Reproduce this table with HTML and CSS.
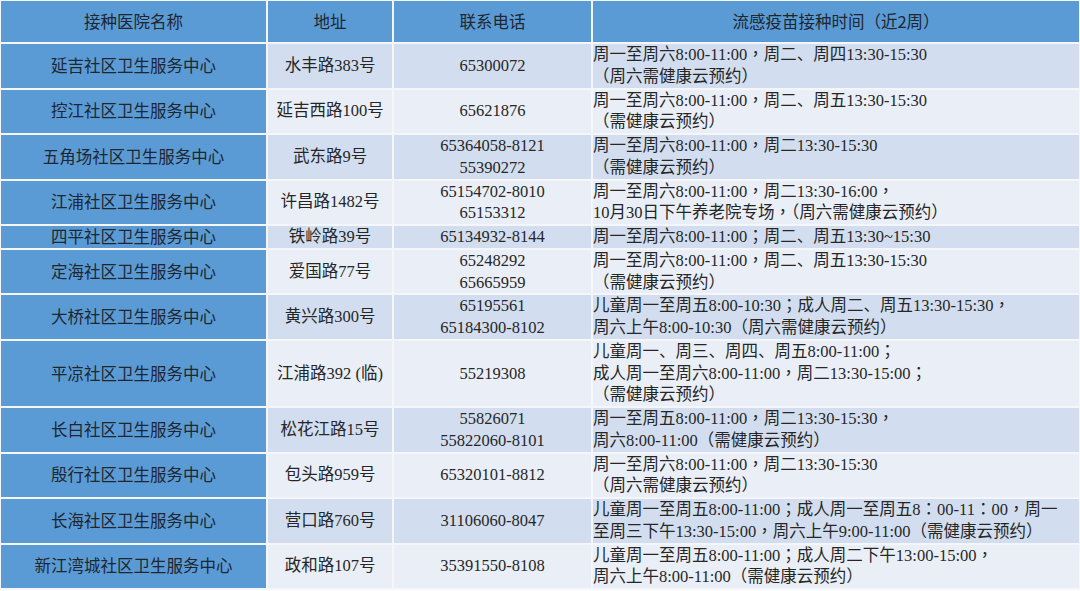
FILE: index.html
```html
<!DOCTYPE html>
<html lang="zh-CN">
<head>
<meta charset="utf-8">
<title>流感疫苗接种时间</title>
<link rel="stylesheet" href="styles.css">
</head>
<body>
<table class="schedule">
  <colgroup>
    <col class="c-name">
    <col class="c-addr">
    <col class="c-tel">
    <col class="c-time">
  </colgroup>
  <thead>
    <tr class="head">
      <th>接种医院名称</th>
      <th>地址</th>
      <th>联系电话</th>
      <th>流感疫苗接种时间（近2周）</th>
    </tr>
  </thead>
  <tbody>
    <tr class="dark">
      <td class="name">延吉社区卫生服务中心</td>
      <td class="addr">水丰路383号</td>
      <td class="tel">65300072</td>
      <td class="time">周一至周六8:00-11:00<span class="p" lang="zh-TW">，</span>周二、周四13:30-15:30<br>（周六需健康云预约）</td>
    </tr>
    <tr class="light">
      <td class="name">控江社区卫生服务中心</td>
      <td class="addr">延吉西路100号</td>
      <td class="tel">65621876</td>
      <td class="time">周一至周六8:00-11:00<span class="p" lang="zh-TW">，</span>周二、周五13:30-15:30<br>（需健康云预约）</td>
    </tr>
    <tr class="dark">
      <td class="name">五角场社区卫生服务中心</td>
      <td class="addr">武东路9号</td>
      <td class="tel">65364058-8121<br>55390272</td>
      <td class="time">周一至周六8:00-11:00<span class="p" lang="zh-TW">，</span>周二13:30-15:30<br>（需健康云预约）</td>
    </tr>
    <tr class="light">
      <td class="name">江浦社区卫生服务中心</td>
      <td class="addr">许昌路1482号</td>
      <td class="tel">65154702-8010<br>65153312</td>
      <td class="time">周一至周六8:00-11:00<span class="p" lang="zh-TW">，</span>周二13:30-16:00<span class="p" lang="zh-TW">，</span><br>10月30日下午养老院专场<span class="p" lang="zh-TW">，</span>（周六需健康云预约）</td>
    </tr>
    <tr class="dark">
      <td class="name">四平社区卫生服务中心</td>
      <td class="addr">铁岭路39号</td>
      <td class="tel">65134932-8144</td>
      <td class="time">周一至周六8:00-11:00<span class="p" lang="zh-TW">；</span>周二、周五13:30~15:30</td>
    </tr>
    <tr class="light">
      <td class="name">定海社区卫生服务中心</td>
      <td class="addr">爱国路77号</td>
      <td class="tel">65248292<br>65665959</td>
      <td class="time">周一至周六8:00-11:00<span class="p" lang="zh-TW">，</span>周二、周五13:30-15:30<br>（需健康云预约）</td>
    </tr>
    <tr class="dark">
      <td class="name">大桥社区卫生服务中心</td>
      <td class="addr">黄兴路300号</td>
      <td class="tel">65195561<br>65184300-8102</td>
      <td class="time">儿童周一至周五8:00-10:30<span class="p" lang="zh-TW">；</span>成人周二、周五13:30-15:30<span class="p" lang="zh-TW">，</span><br>周六上午8:00-10:30（周六需健康云预约）</td>
    </tr>
    <tr class="light">
      <td class="name">平凉社区卫生服务中心</td>
      <td class="addr">江浦路392 (临)</td>
      <td class="tel">55219308</td>
      <td class="time">儿童周一、周三、周四、周五8:00-11:00<span class="p" lang="zh-TW">；</span><br>成人周一至周六8:00-11:00<span class="p" lang="zh-TW">，</span>周二13:30-15:00<span class="p" lang="zh-TW">；</span><br>（需健康云预约）</td>
    </tr>
    <tr class="dark">
      <td class="name">长白社区卫生服务中心</td>
      <td class="addr">松花江路15号</td>
      <td class="tel">55826071<br>55822060-8101</td>
      <td class="time">周一至周五8:00-11:00<span class="p" lang="zh-TW">，</span>周二13:30-15:30<span class="p" lang="zh-TW">，</span><br>周六8:00-11:00（需健康云预约）</td>
    </tr>
    <tr class="light">
      <td class="name">殷行社区卫生服务中心</td>
      <td class="addr">包头路959号</td>
      <td class="tel">65320101-8812</td>
      <td class="time">周一至周六8:00-11:00<span class="p" lang="zh-TW">，</span>周二13:30-15:30<br>（周六需健康云预约）</td>
    </tr>
    <tr class="dark">
      <td class="name">长海社区卫生服务中心</td>
      <td class="addr">营口路760号</td>
      <td class="tel">31106060-8047</td>
      <td class="time">儿童周一至周五8:00-11:00<span class="p" lang="zh-TW">；</span>成人周一至周五8<span class="p" lang="zh-TW">：</span>00-11<span class="p" lang="zh-TW">：</span>00<span class="p" lang="zh-TW">，</span>周一<br>至周三下午13:30-15:00<span class="p" lang="zh-TW">，</span>周六上午9:00-11:00（需健康云预约）</td>
    </tr>
    <tr class="light">
      <td class="name">新江湾城社区卫生服务中心</td>
      <td class="addr">政和路107号</td>
      <td class="tel">35391550-8108</td>
      <td class="time">儿童周一至周五8:00-11:00<span class="p" lang="zh-TW">；</span>成人周二下午13:00-15:00<span class="p" lang="zh-TW">，</span><br>周六上午8:00-11:00（需健康云预约）</td>
    </tr>
  </tbody>
</table>
</body>
</html>
```

FILE: styles.css
```css
html, body {
  margin: 0;
  padding: 0;
  background: #ffffff;
}

body {
  font-family: "Liberation Serif", "Noto Sans CJK SC", serif;
  font-size: 16.5px;
  color: #262626;
}

.schedule {
  table-layout: fixed;
  width: 1082px;
  margin: -1px 0 0 -1px;
  border-collapse: separate;
  border-spacing: 2px;
  background: #f4f6fa;
}

.c-name { width: 265px; }
.c-addr { width: 124px; }
.c-tel  { width: 197px; }
.c-time { width: 486px; }

.schedule th,
.schedule td {
  padding: 0;
  vertical-align: middle;
  line-height: 21.75px;
}

.head th {
  height: 41px;
  background: #5b9bd5;
  font-family: "Noto Sans CJK SC", sans-serif;
  font-weight: normal;
  color: #1e2630;
  text-align: center;
}

.schedule td.name {
  background: #5b9bd5;
  font-family: "Noto Sans CJK SC", sans-serif;
  color: #1e2630;
  text-align: center;
}

.addr,
.tel {
  text-align: center;
}

.time {
  padding-left: 1px;
  text-align: left;
  white-space: nowrap;
}

/* full-width punctuation: traditional-style forms sit centred in the em box */
.p {
  font-family: inherit;
}

.dark td {
  background: #d2deef;
}

.light td {
  background: #eaeff7;
}
```
